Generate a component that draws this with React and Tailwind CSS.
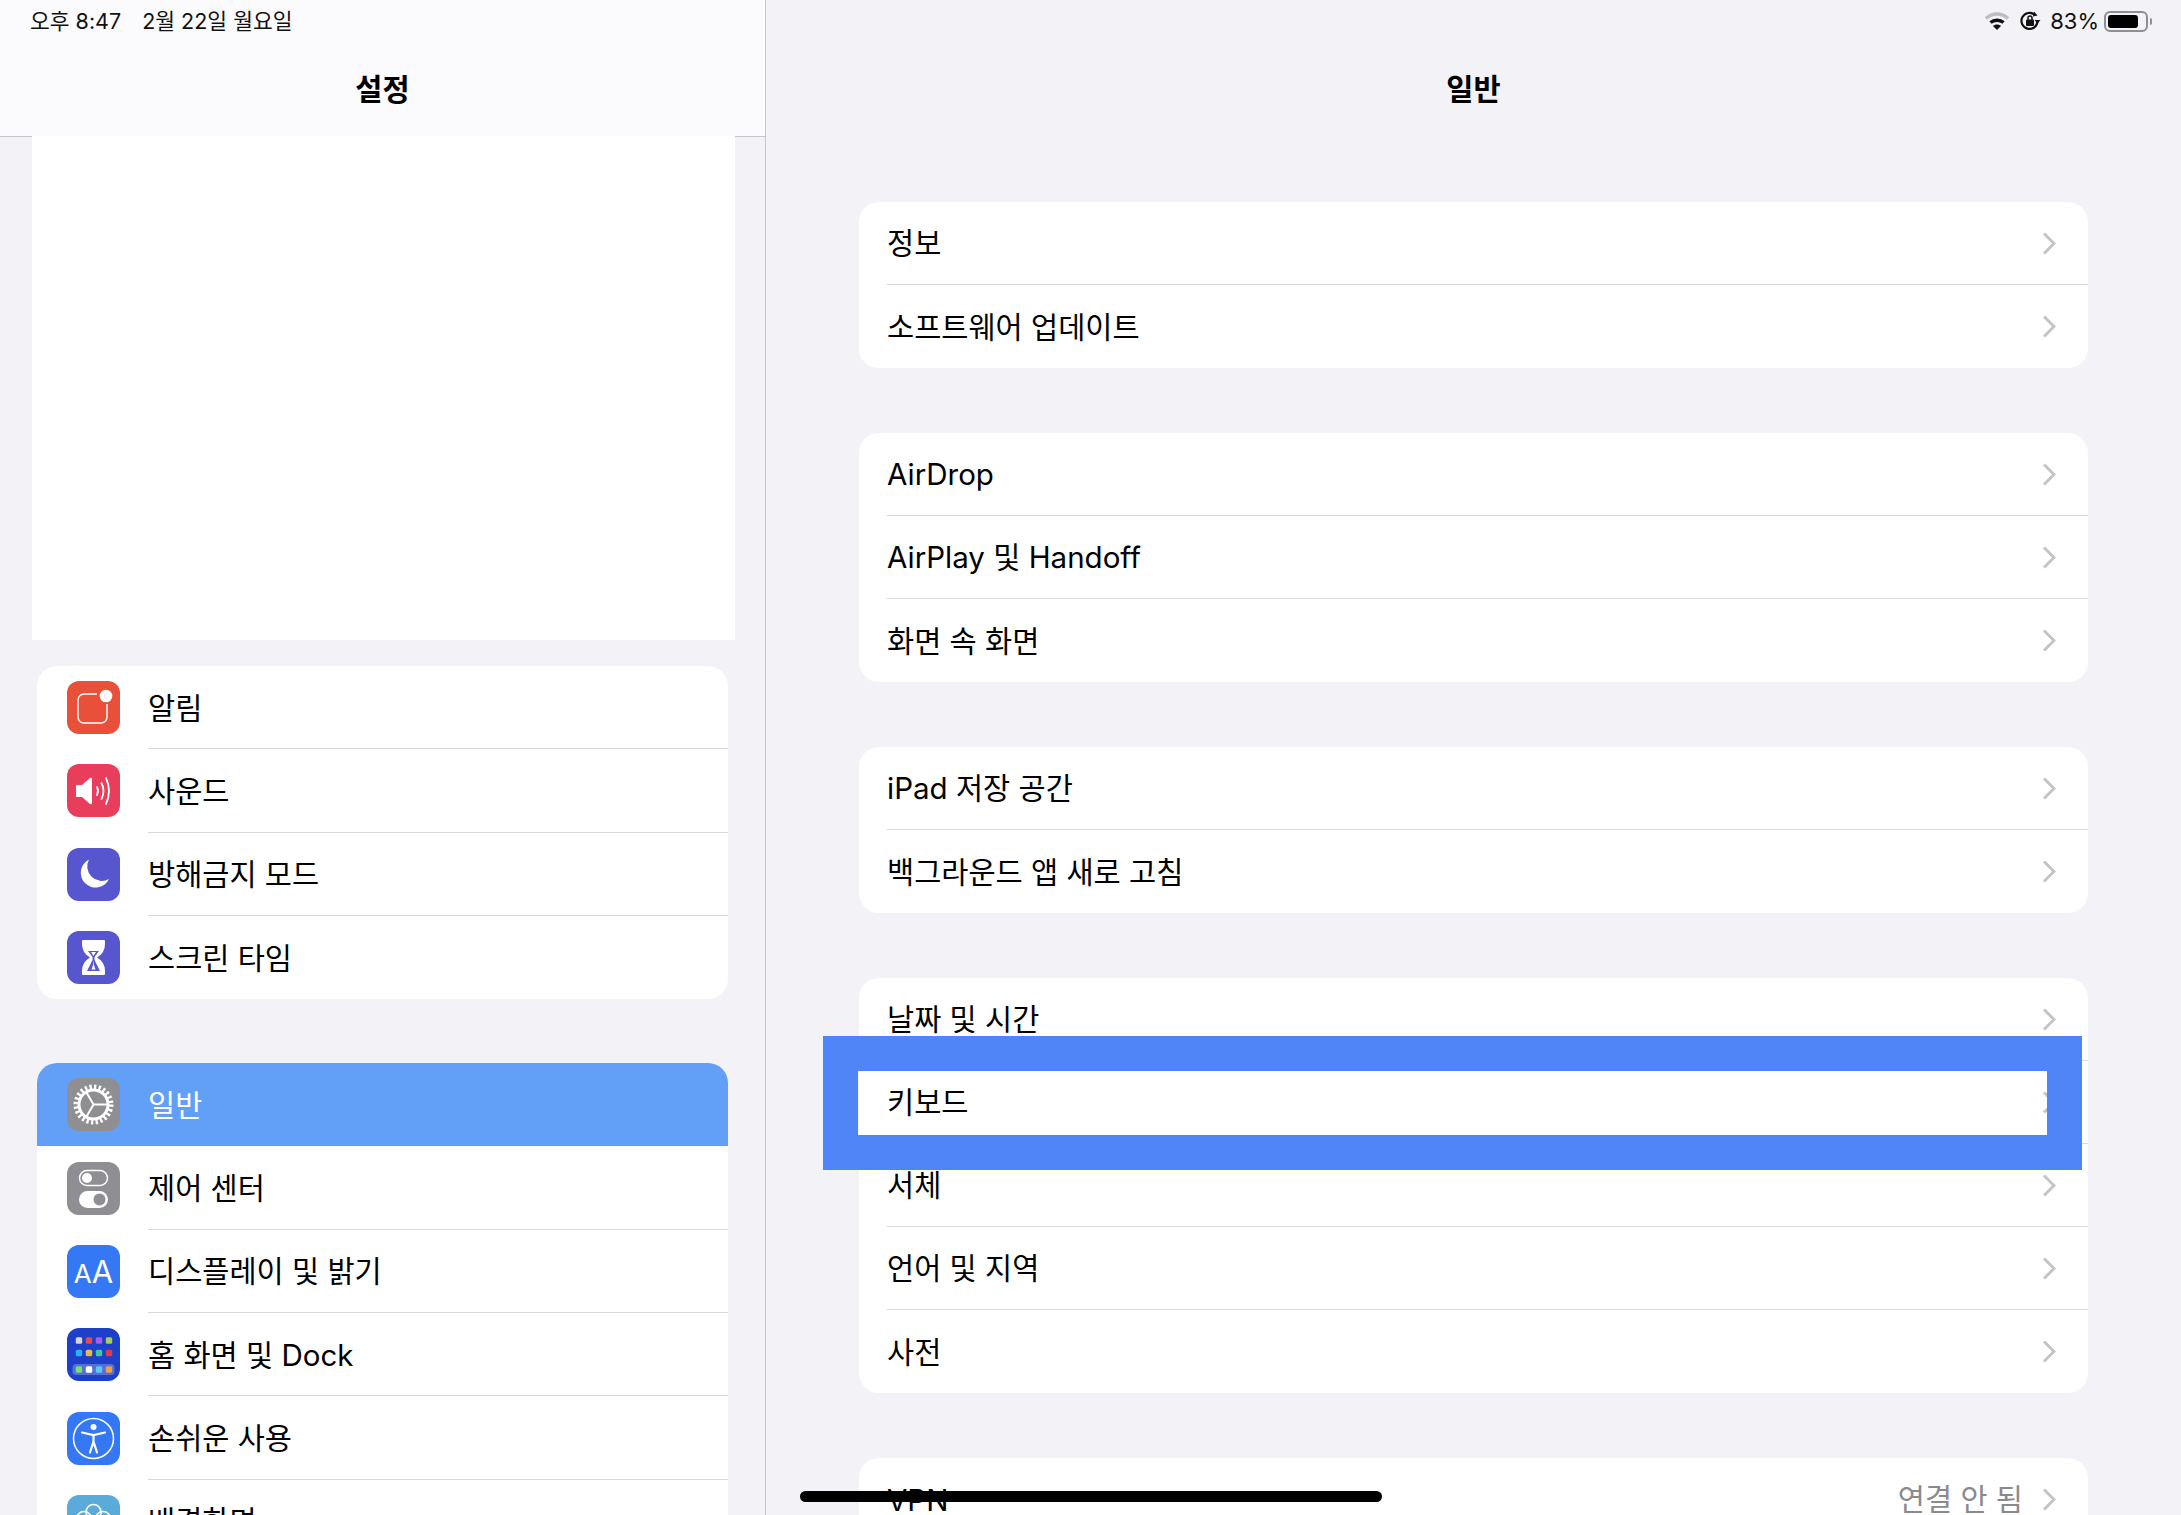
import React from 'react';

const font = "font-['Inter','Noto_Sans_CJK_KR',sans-serif]";

// Settings app icons, all drawn on a 53x53 grid
const IconBox = ({ bg, children }) => (
    <div className={`flex h-[53px] w-[53px] shrink-0 items-center justify-center overflow-hidden rounded-[12px] ${bg}`}>
        {children}
    </div>
);

const Svg = ({ children }) => (
    <svg width="53" height="53" viewBox="0 0 53 53" fill="none">{children}</svg>
);

const BellIcon = () => (
    <IconBox bg="bg-[#e8503a]">
        <Svg>
            <path d="M30 13H17a6 6 0 0 0-6 6v17a6 6 0 0 0 6 6h17a6 6 0 0 0 6-6V23" stroke="white" strokeWidth="1.4" />
            <circle cx="39" cy="15" r="6.3" fill="white" />
        </Svg>
    </IconBox>
);

const SoundIcon = () => (
    <IconBox bg="bg-[#e83e5c]">
        <Svg>
            <path d="M10 21h5l8-7q2-1 2 1v24q0 2-2 1l-8-7h-5q-1 0-1-1V22q0-1 1-1z" fill="white" />
            <path d="M30 23q2 4 0 8M34.5 19q4 8 0 16M39 14q6 13 0 26" stroke="white" strokeWidth="1.8" strokeLinecap="round" />
        </Svg>
    </IconBox>
);

const MoonIcon = () => (
    <IconBox bg="bg-[#5856ce]">
        <Svg>
            <path d="M22 11.500A14.800 14.800 0 1 0 42 31A14.500 14.500 0 0 1 22 11.500z" fill="white" />
        </Svg>
    </IconBox>
);

const HourglassIcon = () => (
    <IconBox bg="bg-[#5856ce]">
        <Svg>
            <path d="M16 9h21q1 0 1 1v3q0 9-8 13.500q8 4.500 8 13.500v3q0 1-1 1H16q-1 0-1-1v-3q0-9 8-13.500q-8-4.500-8-13.500v-3q0-1 1-1z" fill="white" />
            <path d="M21 20h11l-4.500 6v3l5.500 11H20l5.500-11v-3z" fill="#5856ce" />
            <path d="M24 21h5l-2.500 4zM24.500 38.500q2-4 2-9q0 5 2 9z" fill="white" />
        </Svg>
    </IconBox>
);

const GearIcon = () => (
    <IconBox bg="bg-[#8e8e93]">
        <Svg>
            <circle cx="26.500" cy="26.500" r="17.500" stroke="white" strokeWidth="5" strokeDasharray="2.290 2.290" />
            <circle cx="26.500" cy="26.500" r="14.500" stroke="white" strokeWidth="3" />
            <path d="M26.500 26.500H40M26.500 26.500L19.500 14.500M26.500 26.500L19.500 38.500" stroke="white" strokeWidth="2" />
        </Svg>
    </IconBox>
);

const ControlIcon = () => (
    <IconBox bg="bg-[#8e8e93]">
        <Svg>
            <rect x="12.500" y="8.500" width="28" height="15" rx="7.500" stroke="white" strokeWidth="1.500" />
            <circle cx="20" cy="16" r="5" fill="white" />
            <rect x="12" y="29" width="29" height="17" rx="8.500" fill="white" />
            <circle cx="32.500" cy="37.500" r="6" fill="#8e8e93" />
        </Svg>
    </IconBox>
);

const DisplayIcon = () => (
    <IconBox bg="bg-[#3478f6]">
        <span className="flex items-baseline font-['Inter',sans-serif] font-normal leading-none text-white">
            <span className="text-[26px]">A</span>
            <span className="text-[31px]">A</span>
        </span>
    </IconBox>
);

const homeDots = [
    [12, 12.500, '#d6d6d6'], [22, 12.500, '#e5484d'], [32, 12.500, '#a55eea'], [42, 12.500, '#a8d14f'],
    [12, 25, '#2eb0f0'], [22, 25, '#f0b840'], [32, 25, '#3fc9a0'], [42, 25, '#e63946'],
    [12, 41.500, '#78dc78'], [22, 41.500, '#ffffff'], [32, 41.500, '#5ac8fa'], [42, 41.500, '#f0a040'],
];

const HomeIcon = () => (
    <IconBox bg="bg-[#1e3fc9]">
        <Svg>
            <rect x="5.500" y="36" width="42" height="11" rx="3.500" fill="white" fillOpacity="0.25" />
            {homeDots.map(([x, y, c]) => (
                <rect key={`${x}-${y}`} x={x - 3.200} y={y - 3.200} width="6.400" height="6.400" rx="1.500" fill={c} />
            ))}
        </Svg>
    </IconBox>
);

const AccessIcon = () => (
    <IconBox bg="bg-[#3478f6]">
        <Svg>
            <circle cx="26.500" cy="26.500" r="20" stroke="white" strokeWidth="1.500" />
            <circle cx="26.500" cy="15" r="3" fill="white" />
            <path d="M15 20.500l11.500 2.500 11.500-2.500M26.500 23v8M26.500 29.500l-3.500 11M26.500 29.500l3.500 11" stroke="white" strokeWidth="2.200" strokeLinecap="round" />
        </Svg>
    </IconBox>
);

const WallpaperIcon = () => (
    <IconBox bg="bg-[#5aabd9]">
        <Svg>
            <circle cx="26.500" cy="17" r="7.500" stroke="white" strokeWidth="1.600" />
            <circle cx="17" cy="24" r="7.500" stroke="white" strokeWidth="1.600" />
            <circle cx="36" cy="24" r="7.500" stroke="white" strokeWidth="1.600" />
        </Svg>
    </IconBox>
);

const Chevron = () => (
    <svg width="14" height="23" viewBox="0 0 14 23" fill="none" className="shrink-0">
        <path d="M2 1.500l10 10-10 10" stroke="#c4c4c7" strokeWidth="3" />
    </svg>
);

const sidebarTop = [
    { label: '알림', icon: <BellIcon /> },
    { label: '사운드', icon: <SoundIcon /> },
    { label: '방해금지 모드', icon: <MoonIcon /> },
    { label: '스크린 타임', icon: <HourglassIcon /> },
];

const sidebarMain = [
    { label: '일반', icon: <GearIcon />, active: true },
    { label: '제어 센터', icon: <ControlIcon /> },
    { label: '디스플레이 및 밝기', icon: <DisplayIcon /> },
    { label: '홈 화면 및 Dock', icon: <HomeIcon /> },
    { label: '손쉬운 사용', icon: <AccessIcon /> },
    { label: '배경화면', icon: <WallpaperIcon /> },
];

const generalGroups = [
    ['정보', '소프트웨어 업데이트'],
    ['AirDrop', 'AirPlay 및 Handoff', '화면 속 화면'],
    ['iPad 저장 공간', '백그라운드 앱 새로 고침'],
    ['날짜 및 시간', '키보드', '서체', '언어 및 지역', '사전'],
];

const SidebarRow = ({ item, last }) => (
    <div className={`flex h-[83.300px] items-center gap-[28px] pl-[30px] ${item.active ? 'bg-[#62a0f8]' : ''}`}>
        {item.icon}
        <div className={`flex h-full flex-1 items-center pt-[1px] text-[29.500px] ${item.active ? 'text-white' : 'text-black'} ${last || item.active ? '' : 'border-b border-[#d9d9dc]'}`}>
            {item.label}
        </div>
    </div>
);

const GeneralRow = ({ label, value, last }) => (
    <div className="flex h-[83px] items-center pl-[28px]">
        <div className={`flex h-full flex-1 items-center justify-between pr-[32px] text-[29.500px] text-black ${last ? '' : 'border-b border-[#d9d9dc]'}`}>
            <span className="pt-[1px]">{label}</span>
            <span className="flex items-center gap-[19px]">
                {value && <span className="text-[#8a8a8e]">{value}</span>}
                <Chevron />
            </span>
        </div>
    </div>
);

const StatusIcons = () => (
    <div className="flex items-center text-[22px] text-[#111]">
        <svg width="24" height="18" viewBox="0 0 24 18" fill="none">
            <path d="M1 6.500C7 .5 17 .5 23 6.500" stroke="#bdbdc2" strokeWidth="3.500" />
            <path d="M5.500 10.500C9 7.500 15 7.500 18.500 10.500" stroke="#111" strokeWidth="3.500" />
            <path d="M12 18l-4-4c2-2 6-2 8 0z" fill="#111" />
        </svg>
        <svg width="22" height="22" viewBox="0 0 22 22" fill="none" className="ml-[10px]">
            <path d="M18.500 11a8 8 0 1 1-2.600-6" stroke="#111" strokeWidth="2.200" />
            <path d="M15 1.500l3.500 4-4.500 1z M21.500 10l-3 3.500-3-3.500z" fill="#111" />
            <rect x="7" y="9.500" width="8" height="6.500" rx="1" fill="#111" />
            <path d="M9 10V8a2 2 0 0 1 4 0v2" stroke="#111" strokeWidth="1.500" />
        </svg>
        <span className="ml-[9px]">83%</span>
        <div className="ml-[5px] flex h-[21px] w-[44px] items-center rounded-[6px] border-2 border-[#8e8e93] p-[2px]">
            <div className="h-full w-[83%] rounded-[3px] bg-black" />
        </div>
        <div className="ml-[2px] h-[7px] w-[2px] rounded-r bg-[#8e8e93]" />
    </div>
);

export default function App() {
    return (
        <div className={`relative flex h-[1515px] w-[2181px] overflow-hidden bg-[#f2f2f7] ${font}`}>
            {/* Sidebar */}
            <aside className="w-[766px] shrink-0 border-r border-[#c8c8cc]">
                <header className="flex h-[137px] flex-col border-b border-[#c6c6c8] bg-[#fbfbfd]">
                    <div className="flex h-[42px] items-center gap-[21px] pl-[30px] text-[21.500px] text-[#111]">
                        <span>오후 8:47</span>
                        <span>2월 22일 월요일</span>
                    </div>
                    <h1 className="flex flex-1 items-center justify-center text-[29.500px] font-semibold text-black">설정</h1>
                </header>
                <div className="ml-[32px] -mt-[1px] h-[504px] w-[703px] bg-white" />
                <div className="mx-[37px] mt-[26px] overflow-hidden rounded-[20px] bg-white">
                    {sidebarTop.map((item, i) => (
                        <SidebarRow key={item.label} item={item} last={i === sidebarTop.length - 1} />
                    ))}
                </div>
                <div className="mx-[37px] mt-[64px] overflow-hidden rounded-[20px] bg-white">
                    {sidebarMain.map((item) => (
                        <SidebarRow key={item.label} item={item} />
                    ))}
                </div>
            </aside>

            {/* General pane */}
            <main className="flex-1">
                <header className="flex h-[137px] flex-col">
                    <div className="flex h-[42px] items-center justify-end pr-[29px]">
                        <StatusIcons />
                    </div>
                    <h1 className="flex flex-1 items-center justify-center text-[29.500px] font-semibold text-black">일반</h1>
                </header>
                <div className="mx-[93px] mt-[65px] flex flex-col gap-[65px]">
                    {generalGroups.map((rows) => (
                        <div key={rows[0]} className="overflow-hidden rounded-[20px] bg-white">
                            {rows.map((label, i) => (
                                <GeneralRow key={label} label={label} last={i === rows.length - 1} />
                            ))}
                        </div>
                    ))}
                    <div className="overflow-hidden rounded-[20px] bg-white">
                        <GeneralRow label="VPN" value="연결 안 됨" last />
                    </div>
                </div>
            </main>

            {/* Annotation box around the keyboard row */}
            <div className="absolute left-[823px] top-[1036px] h-[134px] w-[1259px] border-[35px] border-[#5085f8]" />

            {/* Home indicator */}
            <div className="absolute left-[800px] top-[1491px] h-[11px] w-[582px] rounded-full bg-black" />
        </div>
    );
}
